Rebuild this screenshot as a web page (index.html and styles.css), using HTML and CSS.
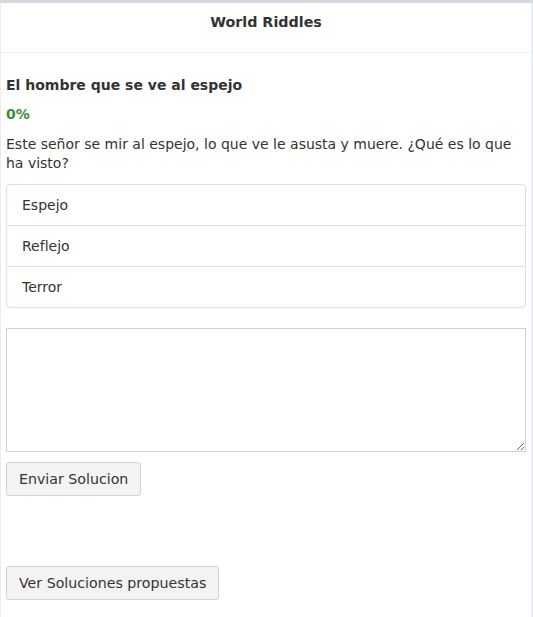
FILE: index.html
```html
<!DOCTYPE html>
<html lang="es">
<head>
<meta charset="utf-8">
<title>World Riddles</title>
<link rel="stylesheet" href="styles.css">
</head>
<body>
<div class="card">
  <header class="card-header">World Riddles</header>
  <main class="card-body">
    <h2 class="riddle-title">El hombre que se ve al espejo</h2>
    <div class="score">0%</div>
    <p class="riddle-text">Este señor se mir al espejo, lo que ve le asusta y muere. ¿Qué es lo que ha visto?</p>
    <ul class="options">
      <li class="option">Espejo</li>
      <li class="option">Reflejo</li>
      <li class="option">Terror</li>
    </ul>
    <textarea class="answer"></textarea>
    <button class="btn">Enviar Solucion</button>
    <div class="spacer"></div>
    <button class="btn">Ver Soluciones propuestas</button>
  </main>
</div>
</body>
</html>
```
FILE: styles.css
```css
html, body {
  margin: 0;
  padding: 0;
}
body {
  background: #e9edf2;
  font-family: "DejaVu Sans", sans-serif;
  font-size: 14px;
  color: #333;
  padding: 0 2px 0 1px;
  min-height: 617px;
  box-sizing: border-box;
  border-top: 3px solid #d3d9e1;
}
.card {
  background: #fff;
  min-height: 614px;
  display: flex;
  flex-direction: column;
}
.card-header {
  height: 50px;
  box-sizing: border-box;
  padding-top: 10px;
  border-bottom: 1px solid #eef0f2;
  text-align: center;
  line-height: 18px;
  font-weight: bold;
  font-size: 14.3px;
  color: #333;
}
.card-body {
  padding: 21px 5px 0 5px;
  display: flex;
  flex-direction: column;
  align-items: flex-start;
}
.riddle-title {
  margin: 0;
  font-size: 14px;
  font-weight: bold;
  line-height: 22px;
}
.score {
  margin-top: 8px;
  color: #3c8a3c;
  font-weight: bold;
  line-height: 20px;
}
.riddle-text {
  margin: 11px 0 0 0;
  line-height: 19px;
}
.options {
  list-style: none;
  margin: 11px 0 0 0;
  padding: 0;
  align-self: stretch;
  border: 1px solid #dcdfe3;
  border-radius: 4px;
}
.option {
  height: 40px;
  line-height: 40px;
  padding-left: 15px;
  border-top: 1px solid #dcdfe3;
}
.option:first-child {
  border-top: none;
}
.answer {
  margin: 20px 0 0 0;
  align-self: stretch;
  height: 124px;
  box-sizing: border-box;
  border: 1px solid #cfd3d8;
  border-radius: 0;
  resize: vertical;
  font-family: inherit;
}
.btn {
  margin-top: 10px;
  height: 34px;
  padding: 0 12px;
  background: #f3f3f3;
  border: 1px solid #d2d2d2;
  border-radius: 3px;
  font-family: "DejaVu Sans", sans-serif;
  font-size: 14.2px;
  color: #333;
}
.spacer {
  height: 60px;
}
```
